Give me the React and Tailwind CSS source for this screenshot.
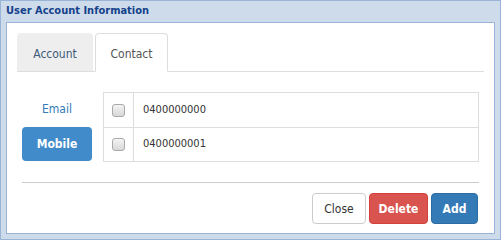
const FONT = { fontFamily: '"DejaVu Sans Condensed", "DejaVu Sans", sans-serif' };

const ROWS = ['0400000000', '0400000001'];

export default function App() {
  return (
    <div
      className="w-[501px] h-[240px] bg-[#cedbea] border border-[#99b4d6] flex flex-col"
      style={FONT}
    >
      {/* window header */}
      <div className="h-[21px] px-[5px] flex items-center text-[11px] font-bold text-[#15428b]">
        User Account Information
      </div>

      <div className="flex-1 ml-[5px] mr-[5px] mb-[5px] bg-white border border-[#99b4d6] px-[10px] pt-[10px] flex flex-col">
        {/* tabs */}
        <div className="flex items-end gap-[2px] border-b border-[#dddddd] h-[39px]">
          <div className="w-[76px] h-[38px] pt-[3px] bg-[#eeeeee] rounded-t-[4px] flex items-center justify-center text-[12px] text-[#3d5a78]">
            Account
          </div>
          <div className="w-[73px] h-[39px] pt-[3px] -mb-px bg-white border border-[#dddddd] border-b-white rounded-t-[4px] flex items-center justify-center text-[12px] text-[#555555]">
            Contact
          </div>
        </div>

        {/* contact list */}
        <div className="flex mt-[20px] pl-[5px] pr-[5px]">
          <div className="w-[70px] flex flex-col">
            <div className="h-[34px] flex items-center justify-center text-[12px] text-[#337ab7]">
              Email
            </div>
            <div className="h-[34px] mt-[1px] rounded-[4px] bg-[#428bca] flex items-center justify-center text-[12px] font-bold text-white">
              Mobile
            </div>
          </div>

          <div className="ml-[11px] flex-1 border border-[#dddddd]">
            {ROWS.map((num, i) => (
              <div
                key={num}
                className={`flex h-[34px] ${i > 0 ? 'border-t border-[#dddddd]' : ''}`}
              >
                <div className="w-[30px] border-r border-[#dddddd] flex items-center justify-center">
                  <span className="w-[13px] h-[13px] rounded-[3px] border border-[#a9a9a9] bg-gradient-to-b from-[#f4f4f4] to-[#d8d8d8]" />
                </div>
                <div className="flex-1 flex items-center pl-[9px] text-[11px] text-[#333333]">
                  {num}
                </div>
              </div>
            ))}
          </div>
        </div>

        <div className="mx-[5px] mt-[20px] border-t border-[#cccccc]" />

        {/* footer buttons */}
        <div className="flex justify-end gap-[3px] mt-[10px] pr-[6px]">
          <button className="w-[54px] h-[31px] rounded-[4px] border border-[#cccccc] bg-white text-[12px] text-[#333333]">
            Close
          </button>
          <button className="w-[59px] h-[31px] rounded-[4px] border border-[#d43f3a] bg-[#d9534f] text-[12px] font-bold text-white">
            Delete
          </button>
          <button className="w-[47px] h-[31px] rounded-[4px] border border-[#2e6da4] bg-[#337ab7] text-[12px] font-bold text-white">
            Add
          </button>
        </div>
      </div>
    </div>
  );
}
